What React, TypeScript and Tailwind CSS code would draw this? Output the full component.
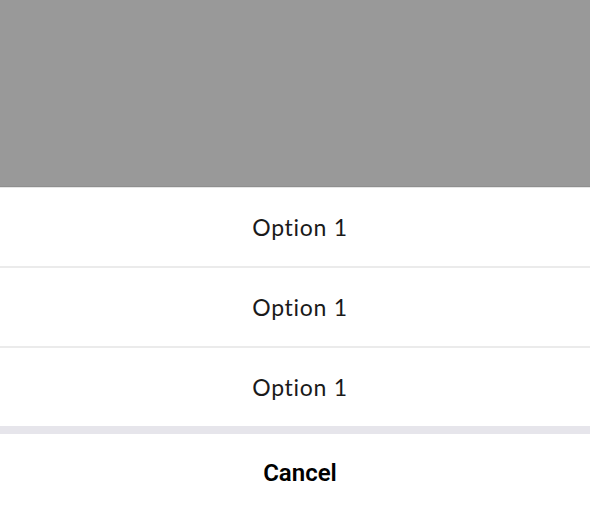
const options = ["Option 1", "Option 1", "Option 1"];

export default function App() {
  return (
    <div className="flex h-[512px] w-[590px] flex-col bg-white">
      {/* dimmed backdrop behind the sheet */}
      <div className="h-[187px] shrink-0 border-b border-[#8f8f8f] bg-[#999999]" />

      <div className="flex flex-col border-t border-[#e6e6e6] bg-white">
        {options.map((label, i) => {
          const last = i === options.length - 1;
          return (
            <button
              key={i}
              className={`flex items-center justify-center pl-[10px] font-['Lato',sans-serif] text-[23px] tracking-[0.7px] text-[#1a1a1a] ${
                last ? "h-[78px]" : "h-[80px] border-b-2 border-[#ebebeb]"
              }`}
            >
              {label}
            </button>
          );
        })}
      </div>

      <div className="h-[8px] shrink-0 bg-[#e6e5eb]" />

      <button className="flex h-[78px] items-center justify-center pl-[10px] font-['Roboto',sans-serif] text-[24px] font-semibold text-black">
        Cancel
      </button>
    </div>
  );
}
